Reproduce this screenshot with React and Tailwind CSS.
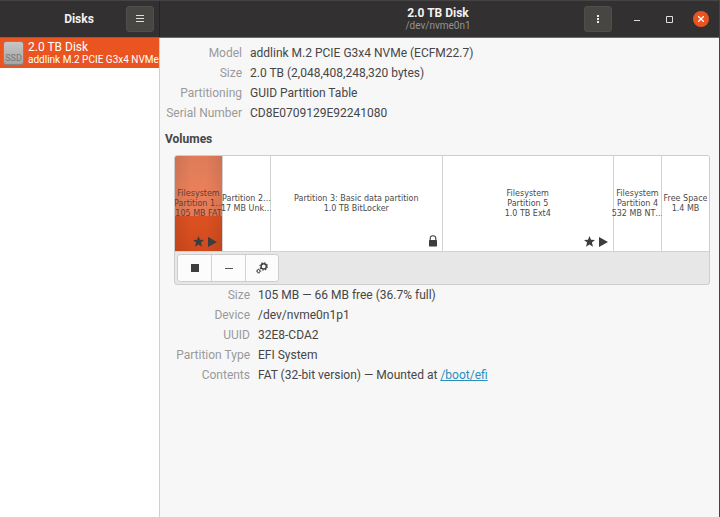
import React from "react";

const diskInfo = [
  ["Model", "addlink M.2 PCIE G3x4 NVMe (ECFM22.7)"],
  ["Size", "2.0 TB (2,048,408,248,320 bytes)"],
  ["Partitioning", "GUID Partition Table"],
  ["Serial Number", "CD8E0709129E92241080"],
];

const volumeInfo = [
  ["Size", "105 MB — 66 MB free (36.7% full)"],
  ["Device", "/dev/nvme0n1p1"],
  ["UUID", "32E8-CDA2"],
  ["Partition Type", "EFI System"],
];

const volumes = [
  { lines: ["Filesystem", "Partition 1…", "105 MB FAT"], icons: ["star", "play"], selected: true },
  { lines: ["Partition 2…", "17 MB Unk…"] },
  { lines: ["Partition 3: Basic data partition", "1.0 TB BitLocker"], icons: ["lock"], wide: true },
  { lines: ["Filesystem", "Partition 5", "1.0 TB Ext4"], icons: ["star", "play"], wide: true },
  { lines: ["Filesystem", "Partition 4", "532 MB NT…"] },
  { lines: ["Free Space", "1.4 MB"] },
];

function Star() {
  return (
    <svg width="11" height="11" viewBox="0 0 11 11" fill="#3d3d3d">
      <path d="M5.5 0 7 3.8 11 4 7.9 6.6 9 10.8 5.5 8.5 2 10.8 3.1 6.6 0 4l4-.2z" />
    </svg>
  );
}

function Play() {
  return (
    <svg width="9" height="10" viewBox="0 0 9 10" fill="#3d3d3d">
      <path d="M0 0 9 5 0 10z" />
    </svg>
  );
}

function Lock() {
  return (
    <svg width="8" height="12" viewBox="0 0 8 12">
      <path d="M1.2 6V3.5C1.2 1.7 2.3.7 4 .7s2.8 1 2.8 2.8V6" fill="none" stroke="#3d3d3d" strokeWidth="1.1" />
      <rect y="5" width="8" height="6.5" rx=".4" fill="#3d3d3d" />
    </svg>
  );
}

function Gears() {
  return (
    <svg width="12" height="12" viewBox="0 0 12 12" fill="none" stroke="#3d3d3d">
      <circle cx="7.7" cy="4.4" r="2.6" strokeWidth="1.4" />
      <circle cx="7.7" cy="4.4" r="3.7" strokeWidth="1.1" strokeDasharray="1.45 1.45" />
      <circle cx="2.6" cy="9.1" r="1.5" strokeWidth="1" />
      <circle cx="2.6" cy="9.1" r="2.2" strokeWidth=".6" strokeDasharray=".86 .86" />
    </svg>
  );
}

const icons = { star: <Star />, play: <Play />, lock: <Lock /> };

function InfoList({ rows, className, children }) {
  return (
    <dl className={className}>
      {rows.map(([label, value]) => (
        <React.Fragment key={label}>
          <dt className="text-right text-[#9a9a9a]">{label}</dt>
          <dd>{value}</dd>
        </React.Fragment>
      ))}
      {children}
    </dl>
  );
}

function Volume({ lines, icons: names = [], selected, wide }) {
  return (
    <button
      type="button"
      aria-pressed={!!selected}
      className={
        "relative flex h-[95px] flex-col items-center justify-center whitespace-nowrap border-r border-[#d2d2d2] font-['DejaVu_Sans',sans-serif] text-[8px] leading-[10px] last:w-[47px] last:border-r-0 " +
        (wide ? "min-w-0 flex-1 " : "w-12 shrink-0 ") +
        (selected
          ? "bg-[linear-gradient(to_right,#00000014,transparent_35%,transparent_65%,#00000014),linear-gradient(to_bottom,#de7c59,#e9805b_35%,#e77b55_63%,#dd5222_63%,#d04a1d)] text-[#5c4038]"
          : "bg-white text-[#4a4a4a]")
      }
    >
      {lines.map((line) => (
        <span key={line}>{line}</span>
      ))}
      <span className="absolute right-[5px] bottom-1 flex items-center gap-1">
        {names.map((name) => (
          <React.Fragment key={name}>{icons[name]}</React.Fragment>
        ))}
      </span>
    </button>
  );
}

export default function App() {
  return (
    <div className="flex min-h-screen flex-col border-r border-[#5b3550] bg-[#f7f7f7] font-[Roboto,'Noto_Sans',sans-serif] text-[12px] text-[#464646]">
      <header className="flex h-[38px] shrink-0 border-t border-b border-t-[#454343] border-b-[#6b6b6b] bg-[#323030] text-[#f2f2f2]">
        <div className="flex w-40 shrink-0 items-center border-r border-[#252424] pr-[5px]">
          <h1 className="flex-1 pl-8 text-center font-bold">Disks</h1>
          <button type="button" aria-label="Application menu" className="flex h-[26px] w-7 items-center justify-center rounded-[3px] border border-[#504e4b] bg-[#484643]">
            <svg width="8" height="8" viewBox="0 0 8 8" stroke="#dedede"><path d="M0 .5h8M0 3.5h8M0 6.5h8" /></svg>
          </button>
        </div>
        <div className="flex flex-1 items-center pr-[10px]">
          <div className="flex-1 pl-[132px] text-center">
            <h2 className="leading-[13px] font-bold">2.0 TB Disk</h2>
            <p className="text-[10px] leading-[12px] text-[#959393]">/dev/nvme0n1</p>
          </div>
          <button type="button" aria-label="Drive options" className="flex h-[26px] w-7 items-center justify-center rounded-[3px] border border-[#504e4b] bg-[#484643]">
            <svg width="2" height="8" viewBox="0 0 2 8" fill="#eeeeee"><path d="M0 0h2v2H0zM0 3h2v2H0zM0 6h2v2H0z" /></svg>
          </button>
          <button type="button" aria-label="Minimize" className="ml-[17px] flex size-4 items-center justify-center">
            <svg width="6" height="4" viewBox="0 0 6 4" stroke="#dedede"><path d="M0 3.5h6" /></svg>
          </button>
          <button type="button" aria-label="Maximize" className="ml-4 flex size-4 items-center justify-center">
            <svg width="7" height="7" viewBox="0 0 7 7" fill="none" stroke="#dedede"><path d="M.5.5h6v6h-6z" /></svg>
          </button>
          <button type="button" aria-label="Close" className="ml-4 flex size-4 items-center justify-center rounded-full bg-[#e95420]">
            <svg width="6" height="6" viewBox="0 0 6 6" stroke="#ffffff" strokeWidth="1.3"><path d="m0 0 6 6M6 0 0 6" /></svg>
          </button>
        </div>
      </header>

      <div className="flex flex-1">
        <aside className="w-40 shrink-0 border-r border-[#cfcfcf] bg-white">
          <button type="button" className="flex h-[30px] w-full items-center gap-1 overflow-hidden bg-[#e95420] pl-[3px] text-left whitespace-nowrap text-white">
            <span className="flex h-6 w-[21px] shrink-0 items-end justify-center rounded-[3px] border border-[#858585] bg-linear-to-b from-[#c6c6c6] to-[#a5a5a5] text-[9px] leading-[11px] text-[#777777]">
              SSD
            </span>
            <span>
              <span className="block leading-[13px]">2.0 TB Disk</span>
              <span className="block text-[10px] leading-[12px]">addlink M.2 PCIE G3x4 NVMe</span>
            </span>
          </button>
        </aside>

        <main className="min-w-0 flex-1 pt-[5px] pr-[9px] pl-[5px]">
          <InfoList rows={diskInfo} className="grid grid-cols-[77px_1fr] gap-x-2 leading-5" />
          <h3 className="mt-[6px] leading-5 font-bold">Volumes</h3>
          <div className="ml-[9px]">
            <section className="mt-[6px] overflow-hidden rounded-[3px] border border-[#cdcdcd] bg-[#e7e7e7]">
              <div className="flex border-b border-[#d2d2d2]">
                {volumes.map((volume) => (
                  <Volume key={volume.lines.join()} {...volume} />
                ))}
              </div>
              <div className="flex h-8 items-center pl-[2px]">
                <div className="flex h-7 divide-x divide-[#d2d2d2] rounded-[3px] border border-[#cdcdcd] bg-[#fcfcfc]">
                  <button type="button" aria-label="Unmount" className="flex w-[34px] items-center justify-center">
                    <span className="size-2 bg-[#3d3d3d]" />
                  </button>
                  <button type="button" aria-label="Delete partition" className="flex w-[34px] items-center justify-center">
                    <span className="h-px w-2 bg-[#555555]" />
                  </button>
                  <button type="button" aria-label="Partition options" className="flex w-8 items-center justify-center">
                    <Gears />
                  </button>
                </div>
              </div>
            </section>
            <InfoList rows={volumeInfo} className="grid grid-cols-[76px_1fr] gap-x-2 leading-5">
              <dt className="text-right text-[#9a9a9a]">Contents</dt>
              <dd>
                FAT (32-bit version) — Mounted at{" "}
                <a href="#boot-efi" className="text-[#2a8fbd] underline">/boot/efi</a>
              </dd>
            </InfoList>
          </div>
        </main>
      </div>
    </div>
  );
}
